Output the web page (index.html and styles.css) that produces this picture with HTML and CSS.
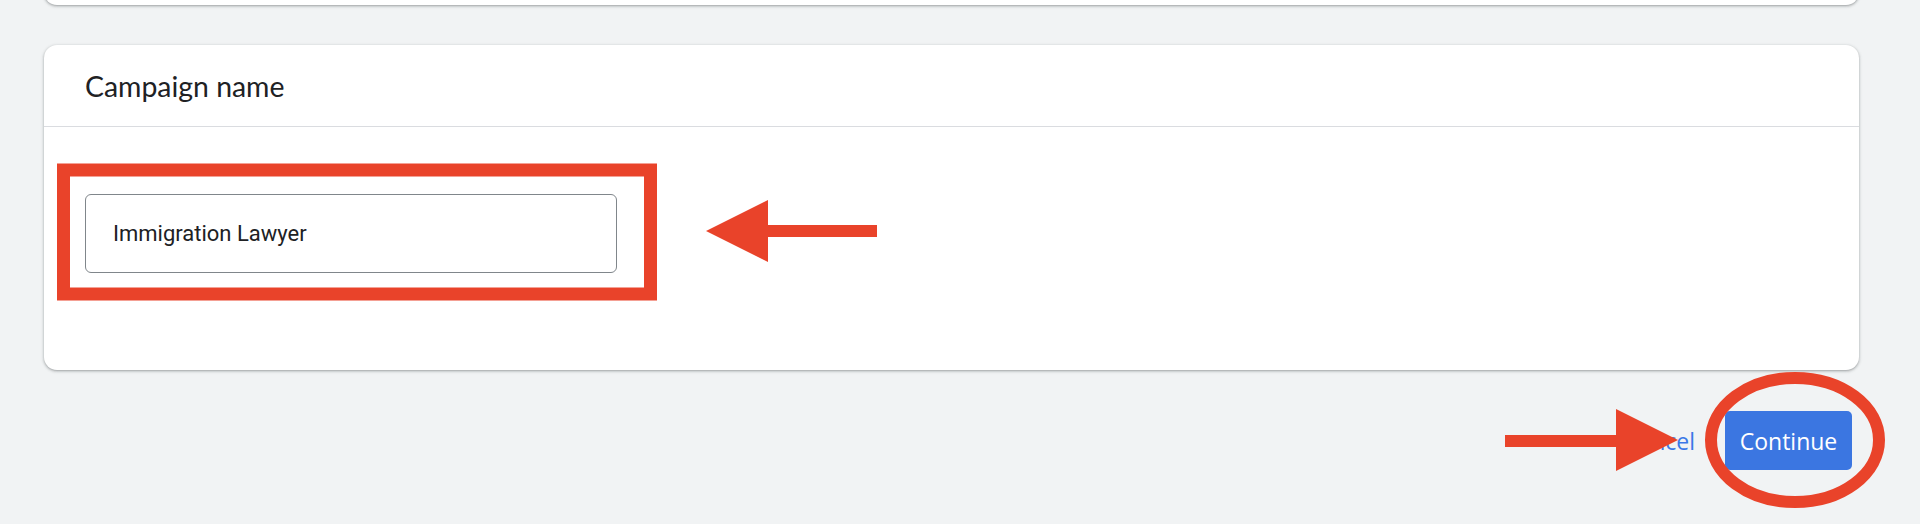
FILE: index.html
```html
<!DOCTYPE html>
<html lang="en">
<head>
<meta charset="utf-8">
<title>Campaign name</title>
<link rel="stylesheet" href="styles.css">
</head>
<body>
<div class="page">
  <div class="card card-prev"></div>
  <section class="card card-name">
    <header class="card-header">Campaign name</header>
    <div class="card-body">
      <div class="text-input">Immigration Lawyer</div>
    </div>
  </section>
  <div class="actions">
    <button class="btn-text">Cancel</button>
    <button class="btn-primary">Continue</button>
  </div>
  <svg class="annotations" width="1920" height="524" viewBox="0 0 1920 524" aria-hidden="true">
    <rect x="63.5" y="170" width="587" height="124" fill="none" stroke="#e9432a" stroke-width="13"/>
    <polygon points="706,231 768,200 768,262" fill="#e9432a"/>
    <rect x="766" y="225" width="111" height="12" fill="#e9432a"/>
    <rect x="1505" y="435" width="115" height="12" fill="#e9432a"/>
    <polygon points="1616,409 1616,471 1678,440" fill="#e9432a"/>
    <ellipse cx="1795" cy="440" rx="84" ry="62" fill="none" stroke="#e9432a" stroke-width="12"/>
  </svg>
</div>
</body>
</html>
```
FILE: styles.css
```css
* { box-sizing: border-box; }
html, body { margin: 0; padding: 0; }
body {
  background: #f1f3f4;
  font-family: Roboto, "Liberation Sans", Arial, sans-serif;
  color: #202124;
}
.page {
  position: relative;
  width: 1920px;
  height: 524px;
  overflow: hidden;
  padding: 0 61px 0 44px;
}
.card {
  background: #fff;
  border-radius: 13px;
  box-shadow: 0 1px 2px rgba(60,64,67,.3), 0 1px 3px 1px rgba(60,64,67,.15);
}
.card-prev {
  height: 45px;
  margin-top: -40px;
  border-radius: 0 0 13px 13px;
}
.card-name {
  margin-top: 40px;
}
.card-header {
  height: 82px;
  padding: 0 41px;
  display: flex;
  align-items: center;
  border-bottom: 1px solid #dadce0;
  font-family: Lato, "Open Sans", sans-serif;
  font-size: 28.4px;
  font-weight: 400;
  color: #202124;
}
.card-body {
  height: 243px;
  padding: 67px 41px 0;
}
.text-input {
  width: 532px;
  height: 79px;
  border: 1px solid #80868b;
  border-radius: 6px;
  padding-left: 27px;
  display: flex;
  align-items: center;
  font-size: 22px;
  color: #202124;
}
.actions {
  display: flex;
  justify-content: flex-end;
  align-items: center;
  padding: 41px 7px 0 0;
}
.btn-text {
  background: none;
  border: none;
  padding: 0;
  margin-right: 30px;
  font-family: "Open Sans", Lato, sans-serif;
  font-size: 23px;
  font-weight: 500;
  color: #3b78e7;
}
.btn-primary {
  width: 127px;
  height: 59px;
  background: #3b76e1;
  border: none;
  border-radius: 5px;
  color: #fff;
  font-family: "Open Sans", Lato, sans-serif;
  font-size: 23px;
  font-weight: 500;
  padding: 0;
}
.annotations {
  position: absolute;
  top: 0;
  left: 0;
  pointer-events: none;
}
```
